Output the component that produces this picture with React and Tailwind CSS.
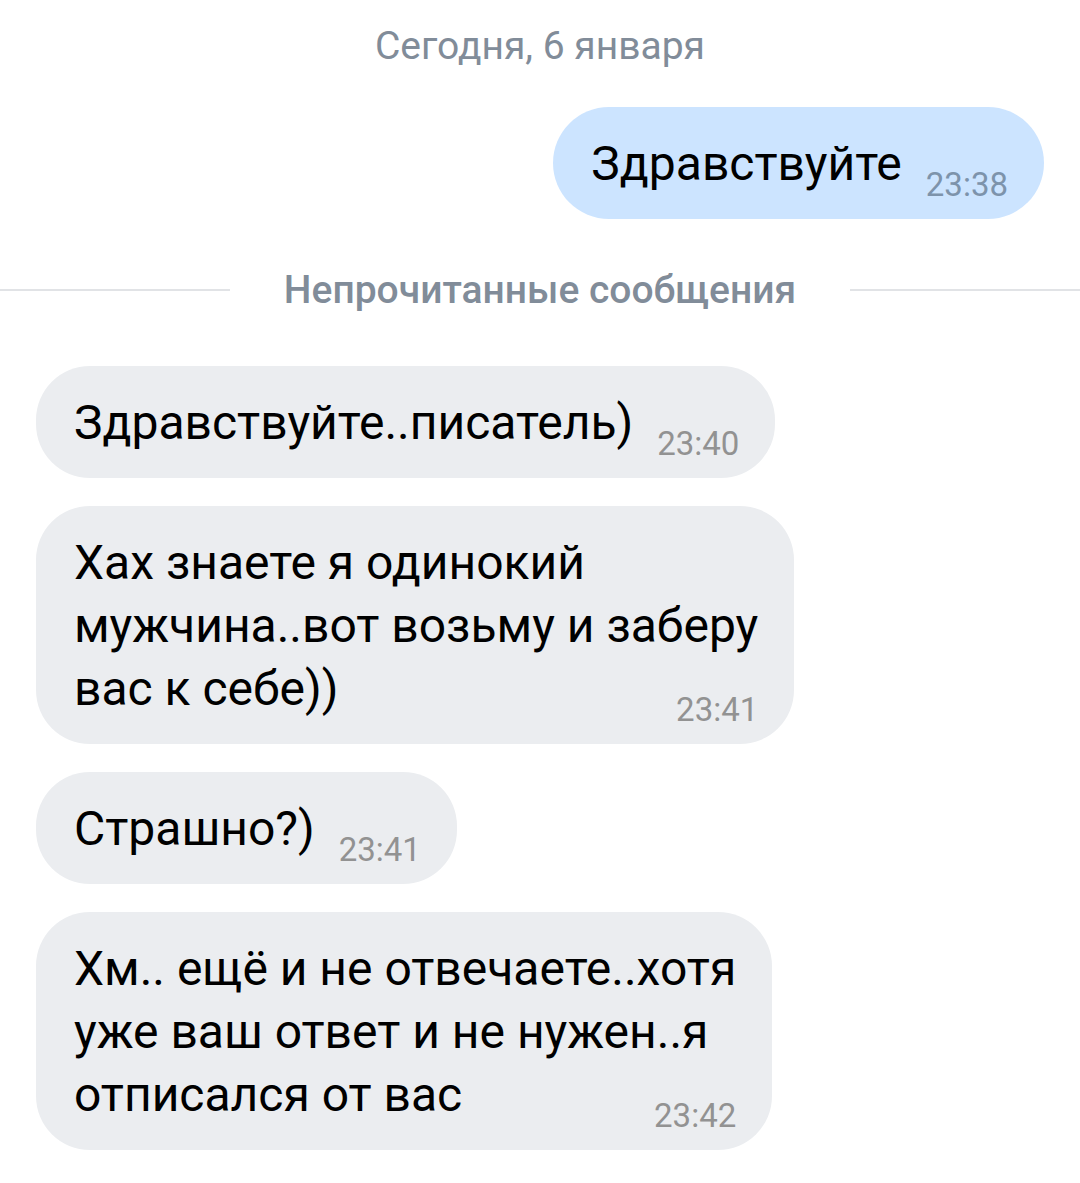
const font = { fontFamily: "Roboto, 'Noto Sans', sans-serif" };

const messages = [
  { id: 1, lines: ["Здравствуйте..писатель)"], time: "23:40" },
  {
    id: 2,
    lines: ["Хах знаете я одинокий", "мужчина..вот возьму и заберу", "вас к себе))"],
    time: "23:41",
  },
  { id: 3, lines: ["Страшно?)"], time: "23:41" },
  {
    id: 4,
    lines: ["Хм.. ещё и не отвечаете..хотя", "уже ваш ответ и не нужен..я", "отписался от вас"],
    time: "23:42",
  },
];

function Bubble({ lines, time, out }) {
  const head = lines.slice(0, -1);
  const last = lines[lines.length - 1];
  return (
    <div
      className={
        "w-fit pl-[38px] pr-[36px] pt-[25px] pb-[24px] text-[48px] leading-[63px] text-black " +
        (out ? "bg-[#cce4ff] rounded-[56px]" : "bg-[#ebedf0] rounded-[54px]")
      }
    >
      {head.map((l, i) => (
        <div key={i} className="whitespace-nowrap">
          {l}
        </div>
      ))}
      <div className="flex items-end justify-between">
        <span className="whitespace-nowrap">{last}</span>
        <span
          className={
            "ml-[24px] text-[33px] leading-[20px] whitespace-nowrap " +
            (out ? "text-[#7d93ab]" : "text-[#929292]")
          }
        >
          {time}
        </span>
      </div>
    </div>
  );
}

export default function App() {
  return (
    <div className="w-[1080px] min-h-[1183px] bg-white flex flex-col" style={font}>
      <div className="pt-[23px] text-center text-[39px] leading-[46px] text-[#818c99]">
        Сегодня, 6 января
      </div>

      <div className="mt-[38px] pr-[36px] flex justify-end">
        <Bubble lines={["Здравствуйте"]} time="23:38" out />
      </div>

      <div className="mt-[48px] flex items-center gap-[54px]">
        <div className="flex-1 h-[2px] bg-[#e1e3e6]" />
        <span className="text-[39px] leading-[46px] font-medium text-[#818c99]">
          Непрочитанные сообщения
        </span>
        <div className="flex-1 h-[2px] bg-[#e1e3e6]" />
      </div>

      <div className="mt-[53px] pl-[36px] flex flex-col gap-[28px]">
        {messages.map((m) => (
          <Bubble key={m.id} lines={m.lines} time={m.time} />
        ))}
      </div>
    </div>
  );
}
